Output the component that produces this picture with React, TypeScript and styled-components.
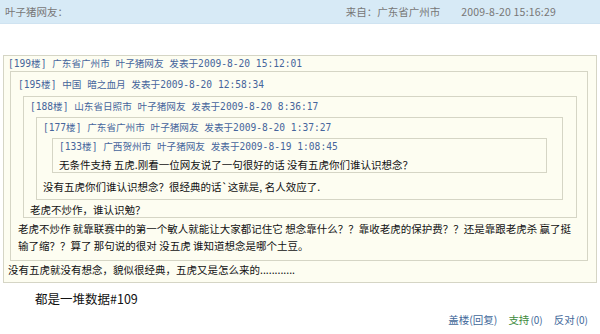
import React from 'react';
import styled, { createGlobalStyle } from 'styled-components';

const GlobalStyle = createGlobalStyle`
  html, body {
    margin: 0;
    padding: 0;
    background: #ffffff;
  }
  body {
    font-family: "Noto Sans CJK SC", "Liberation Sans", sans-serif;
    font-size: 10.5px;
    color: #111;
  }
`;

const Page = styled.div`
  width: 600px;
  height: 334px;
  overflow: hidden;
  display: flex;
  flex-direction: column;
`;

const TopBar = styled.div`
  height: 24px;
  background: #d7eaf6;
  border-bottom: 1px solid #cfe3f1;
  box-sizing: border-box;
  display: flex;
  align-items: center;
  padding: 0 44px 0 5px;
  color: #777;
  font-size: 10.5px;
`;

const Author = styled.span`
  flex: 1;
`;

const From = styled.span`
  margin-right: 21px;
`;

const Stamp = styled.span`
  letter-spacing: 0.2px;
`;

type Space = [number, number, number, number];

const QuoteBox = styled.div<{ $pad: Space; $mar: Space }>`
  border: 1px solid #d5d5c5;
  background: #fdfdf1;
  padding: ${({ $pad }) => $pad.map((v) => `${v}px`).join(' ')};
  margin: ${({ $mar }) => $mar.map((v) => `${v}px`).join(' ')};
`;

const QuoteHead = styled.div`
  font-family: "DejaVu Sans Mono", "Noto Sans CJK SC", monospace;
  font-size: 9.6px;
  line-height: 14px;
  height: 14px;
  color: #46659c;
  white-space: nowrap;
`;

const Line = styled.div<{ $top?: number; $lh?: number }>`
  line-height: ${({ $lh }) => $lh ?? 14}px;
  margin-top: ${({ $top }) => $top ?? 0}px;
  color: #111;
  white-space: nowrap;
`;

const Outer = styled.div`
  margin: 31px 3px 0 3px;
`;

const Reply = styled.div`
  margin: 6px 0 0 35px;
  font-size: 12.5px;
  line-height: 20px;
  color: #111;
`;

const Actions = styled.div`
  display: flex;
  justify-content: flex-end;
  align-items: center;
  gap: 11px;
  margin: 4px 12px 0 0;
  font-size: 10.5px;
  line-height: 14px;
`;

const ActionLink = styled.span<{ $tone: 'blue' | 'green' }>`
  color: ${({ $tone }) => ($tone === 'green' ? '#3b8a3b' : '#41689a')};
`;

const Count = styled.span`
  color: #41689a;
  font-size: 10px;
  margin-left: 1px;
`;

interface QuoteProps {
  head: string;
  pad: Space;
  mar: Space;
  children?: React.ReactNode;
}

const Quote: React.FC<QuoteProps> = ({ head, pad, mar, children }) => (
  <QuoteBox $pad={pad} $mar={mar}>
    <QuoteHead>{head}</QuoteHead>
    {children}
  </QuoteBox>
);

export default function App() {
  return (
    <Page>
      <GlobalStyle />
      <TopBar>
        <Author>叶子猪网友：</Author>
        <From>来自：广东省广州市</From>
        <Stamp>2009-8-20 15:16:29</Stamp>
      </TopBar>
      <Outer>
        <Quote head="[199楼] 广东省广州市 叶子猪网友 发表于2009-8-20 15:12:01" pad={[1, 8, 5, 4]} mar={[0, 0, 0, 0]}>
          <Quote head="[195楼] 中国 暗之血月 发表于2009-8-20 12:58:34" pad={[6, 10, 6, 7]} mar={[0, 0, 0, 2]}>
            <Quote head="[188楼] 山东省日照市 叶子猪网友 发表于2009-8-20 8:36:17" pad={[3, 13, 0, 6]} mar={[4, 0, 0, 5]}>
              <Quote head="[177楼] 广东省广州市 叶子猪网友 发表于2009-8-20 1:37:27" pad={[3, 15, 5, 6]} mar={[3, 0, 0, 6]}>
                <Quote head="[133楼] 广西贺州市 叶子猪网友 发表于2009-8-19 1:08:45" pad={[1, 6, 0, 6]} mar={[3, 0, 0, 9]}>
                  <Line $top={4}>无条件支持 五虎.刚看一位网友说了一句很好的话 没有五虎你们谁认识想念？</Line>
                </Quote>
                <Line $top={7}>没有五虎你们谁认识想念？很经典的话`这就是, 名人效应了.</Line>
              </Quote>
              <Line $top={3}>老虎不炒作，谁认识勉？</Line>
            </Quote>
            <Line $top={2} $lh={17}>老虎不炒作 就靠联赛中的第一个敏人就能让大家都记住它 想念靠什么？？靠收老虎的保护费？？还是靠跟老虎杀 赢了挺</Line>
            <Line $lh={17}>输了缩？？算了 那句说的很对 没五虎 谁知道想念是哪个土豆。</Line>
          </Quote>
          <Line $top={2}>没有五虎就没有想念，貌似很经典，五虎又是怎么来的............</Line>
        </Quote>
      </Outer>
      <Reply>都是一堆数据#109</Reply>
      <Actions>
        <ActionLink $tone="blue">盖楼(回复)</ActionLink>
        <span>
          <ActionLink $tone="green">支持</ActionLink>
          <Count>(0)</Count>
        </span>
        <span>
          <ActionLink $tone="blue">反对</ActionLink>
          <Count>(0)</Count>
        </span>
      </Actions>
    </Page>
  );
}
